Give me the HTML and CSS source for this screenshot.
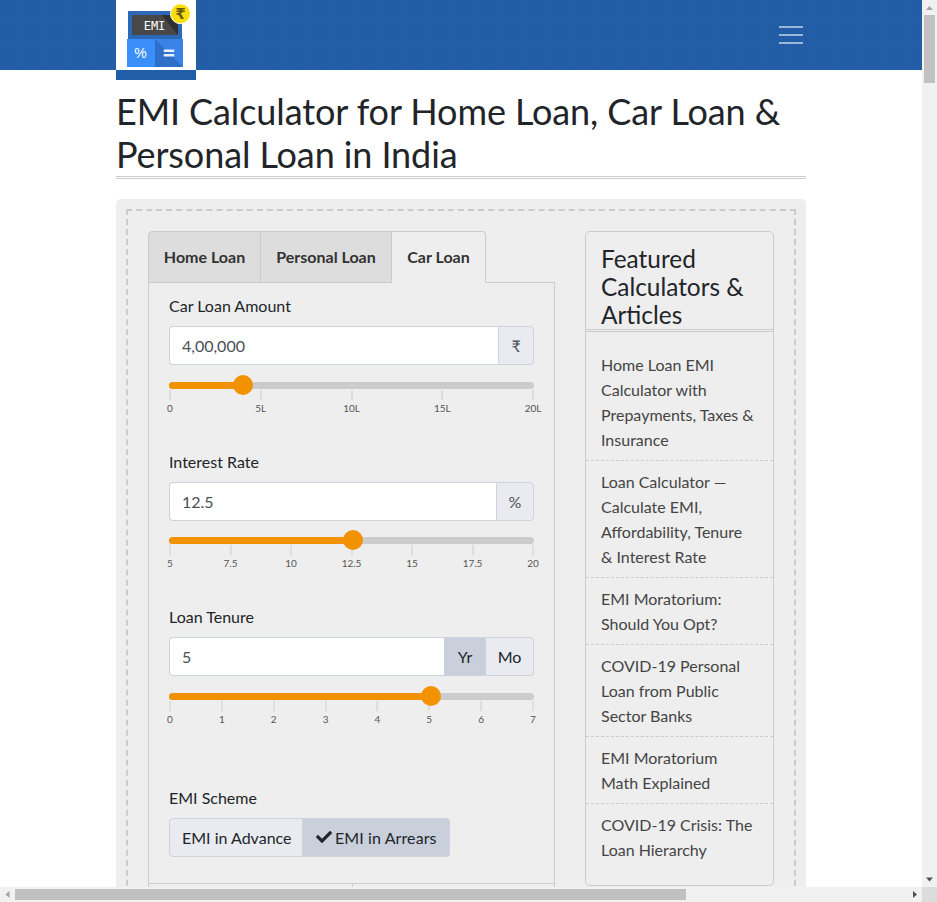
FILE: index.html
```html
<!DOCTYPE html>
<html lang="en">
<head>
<meta charset="utf-8">
<title>EMI Calculator for Home Loan, Car Loan &amp; Personal Loan in India</title>
<link rel="stylesheet" href="styles.css">
</head>
<body>
<div class="window">
<div class="viewport">
<header class="navbar">
  <div class="container navbar-inner">
    <a class="logo" href="#" aria-label="EMI Calculator">
      <svg class="logo-svg" viewBox="0 0 80 80" width="80" height="80">
        <rect class="l-white" width="80" height="70"/>
        <rect class="l-strip" y="70" width="80" height="10"/>
        <rect class="l-body" x="12" y="11" width="54" height="28"/>
        <rect class="l-screen" x="16" y="15" width="46" height="20"/>
        <path class="l-screen-shade" d="M46 15h16v20z"/>
        <text class="l-emi" x="38.500" y="29.500">EMI</text>
        <rect class="l-key-a" x="11" y="39" width="28" height="28"/>
        <rect class="l-key-b" x="39" y="39" width="28" height="28"/>
        <path class="l-key-c" d="M39 39l27 27v1H39z"/>
        <text class="l-pct" x="24.400" y="57.500">%</text>
        <path class="l-eq" d="M47.700 49.500h10.600v2.500H47.700zM47.700 54h10.600v2.500H47.700z"/>
        <circle class="l-coin" cx="64.500" cy="13.700" r="10"/>
        <text class="l-rupee" x="64.500" y="19">₹</text>
      </svg>
    </a>
    <button class="toggler" type="button" aria-label="Toggle navigation">
      <svg class="toggler-svg" viewBox="0 0 30 30" width="30" height="30"><path d="M3 7h24M3 15h24M3 23h24"/></svg>
    </button>
  </div>
</header>

<main class="container">
  <h1 class="page-title">EMI Calculator for Home Loan, Car Loan &amp; Personal Loan in India</h1>

  <section class="panel">
    <div class="panel-dashed">
      <div class="calc">
        <div class="calc-main">
          <ul class="tabs">
            <li class="tab">Home Loan</li>
            <li class="tab">Personal Loan</li>
            <li class="tab tab-active">Car Loan</li>
          </ul>
          <div class="pane">
            <form class="pane-form">
              <div class="field field-amount">
                <label class="field-label" for="amount">Car Loan Amount</label>
                <div class="input-group">
                  <input class="input" id="amount" type="text" value="4,00,000">
                  <span class="addon addon-rupee">₹</span>
                </div>
                <div class="slider">
                  <div class="track">
                    <div class="fill" style="width:20%"><span class="handle"></span></div>
                  </div>
                  <div class="scale">
                    <span class="tick">0</span><span class="tick">5L</span><span class="tick">10L</span><span class="tick">15L</span><span class="tick">20L</span>
                  </div>
                </div>
              </div>

              <div class="field field-rate">
                <label class="field-label" for="rate">Interest Rate</label>
                <div class="input-group">
                  <input class="input" id="rate" type="text" value="12.5">
                  <span class="addon addon-pct">%</span>
                </div>
                <div class="slider">
                  <div class="track">
                    <div class="fill" style="width:50%"><span class="handle"></span></div>
                  </div>
                  <div class="scale">
                    <span class="tick">5</span><span class="tick">7.5</span><span class="tick">10</span><span class="tick">12.5</span><span class="tick">15</span><span class="tick">17.5</span><span class="tick">20</span>
                  </div>
                </div>
              </div>

              <div class="field field-tenure">
                <label class="field-label" for="tenure">Loan Tenure</label>
                <div class="input-group">
                  <input class="input" id="tenure" type="text" value="5">
                  <span class="addon addon-yr">Yr</span>
                  <span class="addon addon-mo">Mo</span>
                </div>
                <div class="slider">
                  <div class="track">
                    <div class="fill" style="width:71.43%"><span class="handle"></span></div>
                  </div>
                  <div class="scale">
                    <span class="tick">0</span><span class="tick">1</span><span class="tick">2</span><span class="tick">3</span><span class="tick">4</span><span class="tick">5</span><span class="tick">6</span><span class="tick">7</span>
                  </div>
                </div>
              </div>

              <div class="scheme">
                <span class="field-label">EMI Scheme</span>
                <div class="btn-group">
                  <button class="btn btn-advance" type="button">EMI in Advance</button>
                  <button class="btn btn-on" type="button">
                    <svg class="check" viewBox="0 0 512 512" width="16" height="16"><path d="M173.898 439.404l-166.4-166.4c-9.997-9.997-9.997-26.206 0-36.204l36.203-36.204c9.997-9.998 26.207-9.998 36.204 0L192 312.69 432.095 72.596c9.997-9.997 26.207-9.997 36.204 0l36.203 36.204c9.997 9.997 9.997 26.206 0 36.204l-294.4 294.401c-9.998 9.997-26.207 9.997-36.204-.001z"/></svg>EMI in Arrears</button>
                </div>
              </div>
            </form>
            <div class="result-row">
              <div class="result-cell"></div>
              <div class="result-cell"></div>
            </div>
          </div>
        </div>

        <aside class="featured">
          <h2 class="featured-title">Featured Calculators &amp; Articles</h2>
          <ul class="featured-list">
            <li class="featured-item"><a class="featured-link" href="#">Home Loan EMI Calculator with Prepayments, Taxes &amp; Insurance</a></li>
            <li class="featured-item"><a class="featured-link" href="#">Loan Calculator — Calculate EMI, Affordability, Tenure &amp; Interest Rate</a></li>
            <li class="featured-item"><a class="featured-link" href="#">EMI Moratorium: Should You Opt?</a></li>
            <li class="featured-item"><a class="featured-link" href="#">COVID-19 Personal Loan from Public Sector Banks</a></li>
            <li class="featured-item"><a class="featured-link" href="#">EMI Moratorium Math Explained</a></li>
            <li class="featured-item"><a class="featured-link" href="#">COVID-19 Crisis: The Loan Hierarchy</a></li>
          </ul>
        </aside>
      </div>
    </div>
  </section>
</main>
</div>

<div class="vbar">
  <svg class="sb-arrow" viewBox="0 0 15 15" width="15" height="15"><polygon class="sb-off" points="4,10 11,10 7.500,6"/></svg>
  <div class="vthumb"></div>
  <svg class="sb-arrow" viewBox="0 0 15 15" width="15" height="15"><polygon class="sb-on" points="4,5.500 11,5.500 7.500,9.500"/></svg>
</div>
<div class="hbar">
  <svg class="sb-arrow" viewBox="0 0 15 15" width="15" height="15"><polygon class="sb-off" points="9.500,4 9.500,11 5.500,7.500"/></svg>
  <div class="hthumb"></div>
  <svg class="sb-arrow" viewBox="0 0 15 15" width="15" height="15"><polygon class="sb-on" points="6,4 6,11 10,7.500"/></svg>
</div>
<div class="corner"></div>
</div>
</body>
</html>
```

FILE: styles.css
```css
* { box-sizing: border-box; }
html, body { height: 100%; }
body {
  margin: 0;
  overflow: hidden;
  font-family: "Lato", "Liberation Sans", sans-serif;
  font-size: 16px;
  line-height: 25px;
  color: #212529;
  background: #fff;
}

/* window with its scrollbars */
.window {
  display: grid;
  grid-template-columns: 1fr 15px;
  grid-template-rows: 1fr 15px;
  height: 100%;
}
.viewport { overflow: hidden; min-width: 0; min-height: 0; }
.vbar, .hbar { display: flex; justify-content: space-between; background: #f1f1f1; }
.vbar { flex-direction: column; }
.corner { background: #dcdcdc; }
.sb-arrow { display: block; flex: none; }
.sb-off { fill: #a3a3a3; }
.sb-on { fill: #505050; }
.vthumb { width: 11px; height: 68px; margin: 0 2px auto; background: #c1c1c1; }
.hthumb { height: 11px; width: 671px; margin: 2px auto 2px 0; background: #c1c1c1; }

.container { width: 690px; margin: 0 auto; }

/* navbar */
.navbar {
  height: 70px;
  background-color: #225da8;
  background-image:
    repeating-linear-gradient(90deg, rgba(0,0,0,.02) 0 1px, rgba(255,255,255,.005) 1px 3px),
    repeating-linear-gradient(0deg, rgba(0,0,0,.012) 0 1px, rgba(255,255,255,.005) 1px 3px);
}
.navbar-inner { display: flex; justify-content: space-between; align-items: flex-start; height: 70px; }
.logo { display: block; width: 80px; height: 80px; position: relative; z-index: 2; }
.logo-svg { display: block; }
.l-white { fill: #fff; }
.l-strip { fill: #225da8; }
.l-body { fill: #2a68b8; }
.l-screen { fill: #484848; }
.l-screen-shade { fill: #303030; }
.l-emi { fill: #fff; font-family: "DejaVu Sans Mono", monospace; font-size: 12px; text-anchor: middle; }
.l-key-a { fill: #3a8ffb; }
.l-key-b { fill: #3b82e8; }
.l-key-c { fill: #2f6fc9; }
.l-pct { fill: #fff; font-family: "Liberation Sans", sans-serif; font-size: 14px; text-anchor: middle; }
.l-eq { fill: #e6f0ff; }
.l-coin { fill: #fbdf0c; stroke: #fff; stroke-width: 1; }
.l-rupee { fill: #6b5710; font-family: "DejaVu Sans", sans-serif; font-weight: 700; font-size: 15px; text-anchor: middle; }
.toggler { margin-top: 20px; padding: 0; border: 0; background: none; width: 30px; height: 30px; }
.toggler-svg { display: block; }
.toggler-svg path { stroke: rgba(255,255,255,.55); stroke-width: 2; fill: none; }

/* title */
.page-title {
  margin: 20px 0;
  font-size: 36px;
  font-weight: 400;
  line-height: 1.2;
  letter-spacing: -.1px;
  color: #212529;
  border-bottom: 3px double #ccc;
}

/* panel */
.panel { background: #eee; border-radius: 5px; padding: 10px; }
.panel-dashed { border: 2px dashed #ccc; padding: 20px; }
.calc { display: grid; grid-template-columns: 407px 189px; column-gap: 30px; align-items: start; }

/* tabs */
.tabs {
  display: grid;
  grid-template-columns: 113px 131px 94px;
  width: 338px;
  list-style: none;
  margin: 0;
  padding: 0;
  position: relative;
  z-index: 1;
}
.tab {
  height: 52px;
  padding-top: 12px;
  text-align: center;
  font-weight: 700;
  color: #333;
  background: #ddd;
  border: 1px solid #ccc;
  border-left-width: 0;
}
.tab:first-child { border-left-width: 1px; border-top-left-radius: 4px; }
.tab-active { background: #eee; border-bottom-color: #eee; border-top-right-radius: 4px; }
.pane { border: 1px solid #ccc; margin-top: -1px; }
.pane-form { padding: 10px 20px 0; }

/* fields */
.field-label { display: block; margin-bottom: 7.500px; }
.field-amount { height: 156px; }
.field-rate { height: 155px; }
.field-tenure { height: 180.6px; }
.input-group { display: flex; height: 39px; }
.input {
  flex: 1;
  min-width: 0;
  height: 100%;
  padding: 6px 12px;
  font: inherit;
  color: #495057;
  background: #fff;
  border: 1px solid #cdd2dd;
  border-right-width: 0;
  border-radius: 4px 0 0 4px;
}
.addon {
  display: flex;
  align-items: center;
  justify-content: center;
  color: #495057;
  background: #e9ebf0;
  border: 1px solid #cdd2dd;
}
.addon:last-child { border-radius: 0 4px 4px 0; }
.addon-rupee { width: 36px; }
.addon-pct { width: 38px; }
.addon-yr { width: 42px; color: #212529; background: #c9d0db; border-width: 1px 0; }
.addon-mo { width: 48px; color: #212529; border-left-width: 0; }

/* sliders */
.slider { margin-top: 17px; }
.field-rate .slider { margin-top: 16px; }
.track { height: 7px; border-radius: 4px; background: #ccc; }
.fill { position: relative; height: 7px; border-radius: 4px; background: #f29200; }
.handle {
  position: absolute;
  right: -11px;
  top: -6.500px;
  width: 20px;
  height: 20px;
  border-radius: 50%;
  background: #f29200;
}
.scale { display: flex; justify-content: space-between; margin-top: 1px; }
.tick {
  display: flex;
  flex-direction: column;
  align-items: center;
  width: 2px;
  font-size: 10px;
  line-height: 12px;
  color: #555;
  white-space: nowrap;
}
.tick::before { content: ""; display: block; flex: none; width: 2px; height: 10px; margin-bottom: 2px; background: #ddd; }

/* scheme */
.scheme { height: 98px; }
.scheme .field-label { margin-bottom: 8px; }
.btn-group { display: flex; height: 39px; }
.btn {
  display: flex;
  align-items: center;
  padding: 0 0 0 12px;
  font: inherit;
  white-space: nowrap;
  color: #212529;
  background: #e9ebf0;
  border: 1px solid #cdd2dd;
  border-radius: 4px 0 0 4px;
}
.btn-advance { width: 134px; }
.btn-on { width: 147px; padding-left: 13px; background: #c9d0db; border-left-width: 0; border-radius: 0 4px 4px 0; letter-spacing: .1px; }
.check { display: block; flex: none; margin-right: 3px; fill: #212529; }

/* results */
.result-row { display: grid; grid-template-columns: 203px 1fr; border-top: 1px solid #ccc; height: 120px; }
.result-cell + .result-cell { border-left: 1px solid #ccc; }

/* featured */
.featured { border: 1px solid #ccc; border-radius: 5px; }
.featured-title {
  margin: 0;
  padding: 13px 15px 0;
  font-size: 24.400px;
  font-weight: 400;
  line-height: 28px;
  color: #212529;
  border-bottom: 3px double #ccc;
}
.featured-list { list-style: none; margin: 0; padding: 11.500px 0 15px; }
.featured-item { padding: 8px 17px 8px 15px; border-bottom: 1px dashed #ccc; }
.featured-item:last-child { border-bottom: 0; }
.featured-link { color: #444; text-decoration: none; display: block; }
```
